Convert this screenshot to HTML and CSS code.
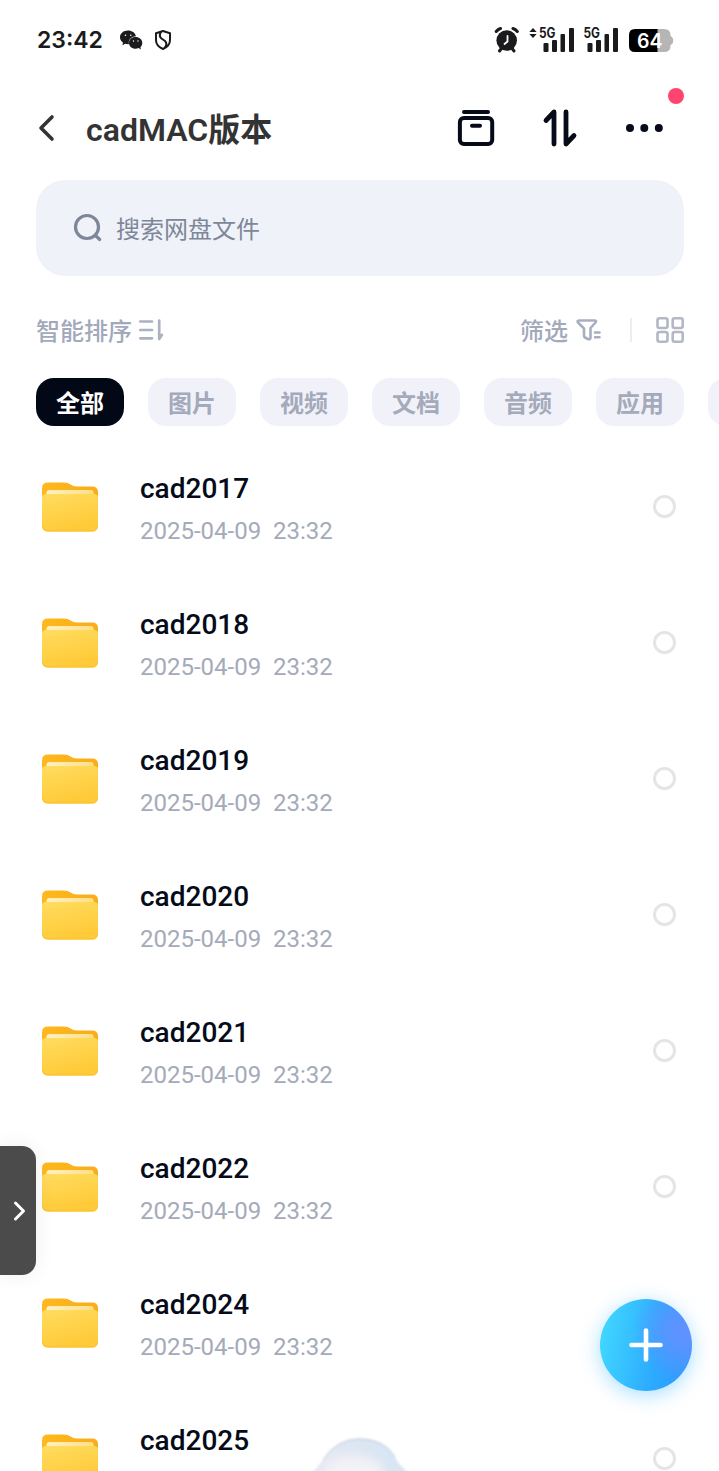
FILE: index.html
```html
<!DOCTYPE html>
<html lang="zh-CN">
<head>
<meta charset="utf-8">
<title>cadMAC版本</title>
<link rel="stylesheet" href="styles.css">
</head>
<body>
<svg class="defs" width="0" height="0" aria-hidden="true">
  <defs>
    <linearGradient id="front" x1="0" y1="0" x2="0.35" y2="1"><stop offset="0" stop-color="#ffdc60"/><stop offset="1" stop-color="#ffca38"/></linearGradient>
    <linearGradient id="back" x1="0" y1="0" x2="1" y2="0"><stop offset="0" stop-color="#ffb81f"/><stop offset="1" stop-color="#f9ad16"/></linearGradient>
    <linearGradient id="paper" x1="0" y1="0" x2="1" y2="0"><stop offset="0" stop-color="#fff0c4"/><stop offset="1" stop-color="#ffdf86"/></linearGradient>
  </defs>
  <symbol id="folder" viewBox="0 0 56 50">
    <path fill="url(#back)" d="M0 18V6Q0 .5 6 .5H22Q26 .5 28.500 2.500Q31 4.500 35 4.500H50Q56 4.500 56 10V18Z"/>
    <path fill="url(#paper)" d="M4.500 14V10.500Q4.500 8 7.500 8H48.500Q51.500 8 51.500 10.500V14Z"/>
    <path fill="url(#front)" d="M0 15.500Q0 12 4 12H52Q56 12 56 15.500V43.500Q56 49.500 50 49.500H6Q0 49.500 0 43.500Z"/>
    <path fill="none" stroke="#fabf30" stroke-width="1" d="M.7 44Q1 49 6 49H50Q55 49 55.300 44"/>
  </symbol>
</svg>
<main class="screen">
  <header class="status">
    <time class="clock">23:42</time>
    <svg class="wechat" width="24" height="22" viewBox="119 29 24 22"><path fill="#1b1b1d" d="M128 30.500C123.500 30.500 120 33.400 120 37.200C120 39.500 121.200 41.300 123 42.600L122.400 45.200L125.300 43.700Q127 44.300 129 44.100C128 39.800 131 36.400 136 36.200C135 32.700 132 30.500 128 30.500Z"/><path fill="#1b1b1d" d="M135.500 37C131.600 37 129 39.600 129 42.900C129 46.200 131.900 48.700 135.500 48.700Q137.200 48.700 138.600 48.100L141 49.400L140.400 47.200C141.500 46.100 142.300 44.600 142.300 42.900C142.300 39.500 139.300 37 135.500 37Z"/><g fill="#fff"><circle cx="125.500" cy="35.300" r=".8"/><circle cx="130.800" cy="35.300" r=".8"/><circle cx="133.500" cy="41" r=".7"/><circle cx="138" cy="41" r=".7"/></g></svg>
    <svg class="shield" width="18" height="22" viewBox="154 29 18 22"><path fill="none" stroke="#1b1b1d" stroke-width="2" stroke-linejoin="round" d="M163 31L170 33.300V40Q170 46 163 49Q156 46 156 40V33.300ZM161 32Q158.500 36 161.500 38.500L165 41Q168 44 164.500 48"/></svg>
    <svg class="alarm" width="26" height="28" viewBox="494 26 26 28"><circle cx="506.700" cy="40.500" r="10.300" fill="#1b1b1d"/><g fill="none" stroke="#1b1b1d" stroke-width="3" stroke-linecap="round"><path d="M496.200 31.500Q498 29.200 500.500 28.500M517.300 31.500Q515.500 29.200 513 28.500M501 49L499.500 51M512.500 49L514 51"/></g><path fill="none" stroke="#fff" stroke-width="1.800" stroke-linecap="round" d="M507.500 36V41.500L504.500 44"/></svg>
    <svg class="signal-main" width="46" height="40" viewBox="529 20 46 40"><g fill="#1b1b1d"><path d="M529.300 32L533 28L536.700 32ZM529.300 34H536.700L533 38Z"/><text class="network" x="539" y="38.300" textLength="16.500" lengthAdjust="spacingAndGlyphs">5G</text><rect x="543.500" y="43" width="5" height="9" rx="1"/><rect x="552" y="40" width="5" height="12" rx="1"/><rect x="560.500" y="34" width="4.500" height="18" rx="1"/><rect x="569" y="28" width="5" height="24" rx="1"/></g></svg>
    <svg class="signal-second" width="36" height="40" viewBox="583 20 36 40"><g fill="#1b1b1d"><text class="network" x="583.500" y="38.300" textLength="16.500" lengthAdjust="spacingAndGlyphs">5G</text><rect x="587.500" y="43" width="5" height="9" rx="1"/><rect x="596" y="40" width="5" height="12" rx="1"/><rect x="604.500" y="34" width="4.500" height="18" rx="1"/><rect x="613" y="28" width="5" height="24" rx="1"/></g></svg>
    <svg class="battery" width="45" height="40" viewBox="629 20 45 40"><path fill="#b5b5b5" d="M657 29H664Q670.500 29 670.500 35V36Q673.200 37 673.200 40.500Q673.200 44 670.500 45V46Q670.500 52 664 52H657Z"/><path fill="#000" d="M657.500 29H635Q629 29 629 35V46Q629 52 635 52H657.500Z"/><text class="charge" x="637" y="48" textLength="25.500" lengthAdjust="spacingAndGlyphs">64</text></svg>
  </header>

  <nav class="topbar">
    <svg class="back" width="18" height="30" viewBox="38 113 18 30"><path fill="none" stroke="#333" stroke-width="3.600" stroke-linecap="round" stroke-linejoin="round" d="M52 117L41 128L52 139"/></svg>
    <h1 class="title">cadMAC版本</h1>
    <svg class="archive" width="38" height="38" viewBox="457 109 38 38"><g fill="none" stroke="#050b19" stroke-width="4" stroke-linecap="round"><path d="M464 112H488M472 125.800H480"/><rect x="459.900" y="118" width="32.300" height="26" rx="4"/></g></svg>
    <svg class="transfer" width="36" height="40" viewBox="542 108 36 40"><path fill="none" stroke="#050b19" stroke-width="4.800" stroke-linecap="round" stroke-linejoin="round" d="M554 144V112L546 120.500M566 112V144L574 135.500"/></svg>
    <span class="more"><svg width="39" height="10" viewBox="625 123 39 10"><g fill="#050b19"><circle cx="630" cy="128" r="4"/><circle cx="644.300" cy="128" r="4"/><circle cx="658.800" cy="128" r="4"/></g></svg><i class="dot"></i></span>
  </nav>

  <div class="search">
    <svg width="30" height="30" viewBox="73 213 30 30"><g fill="none" stroke="#7e8798" stroke-width="3.200" stroke-linecap="round"><circle cx="87" cy="227" r="11.500"/><path d="M95.500 235.500L99.700 239.500"/></g></svg>
    <span>搜索网盘文件</span>
  </div>

  <div class="tools">
    <span class="label">智能排序</span>
    <svg class="sort" width="26" height="24" viewBox="138 318 26 24"><g fill="none" stroke="#abb1c1" stroke-width="2.700" stroke-linecap="round" stroke-linejoin="round"><path d="M140.300 321.500H152M140.300 330H152M140.300 338.300H152M159.200 320.500V339L161.800 335"/></g></svg>
    <span class="label filter">筛选</span>
    <svg class="funnel" width="26" height="24" viewBox="576 318 26 24"><g fill="none" stroke="#a8aec0" stroke-width="2.600" stroke-linecap="round" stroke-linejoin="round"><path d="M579 320.500H594.500Q597 320.500 595.500 322.500L590.500 328V337.500Q590.500 340 588 339L585 337.500Q584 337 584 336V328.500L578 322.500Q576.800 320.800 579 320.500ZM595 332.500H599.500M595 337.300H599.500"/></g></svg>
    <i class="divider"></i>
    <svg class="grid" width="30" height="28" viewBox="655 316 30 28"><g fill="none" stroke="#b3b7c6" stroke-width="2.600"><rect x="657.500" y="318.300" width="10" height="9.700" rx="2"/><rect x="672.700" y="318.300" width="10" height="9.700" rx="2"/><rect x="657.500" y="332" width="10" height="9.700" rx="2"/><rect x="672.700" y="332" width="10" height="9.700" rx="2"/></g></svg>
  </div>

  <div class="chips">
    <span class="chip active">全部</span><span class="chip">图片</span><span class="chip">视频</span><span class="chip">文档</span><span class="chip">音频</span><span class="chip">应用</span><span class="chip"></span>
  </div>

  <ul class="files">
    <li class="file"><svg class="folder"><use href="#folder"/></svg><div class="info"><b>cad2017</b><small>2025-04-09&nbsp; 23:32</small></div><i class="radio"></i></li>
    <li class="file"><svg class="folder"><use href="#folder"/></svg><div class="info"><b>cad2018</b><small>2025-04-09&nbsp; 23:32</small></div><i class="radio"></i></li>
    <li class="file"><svg class="folder"><use href="#folder"/></svg><div class="info"><b>cad2019</b><small>2025-04-09&nbsp; 23:32</small></div><i class="radio"></i></li>
    <li class="file"><svg class="folder"><use href="#folder"/></svg><div class="info"><b>cad2020</b><small>2025-04-09&nbsp; 23:32</small></div><i class="radio"></i></li>
    <li class="file"><svg class="folder"><use href="#folder"/></svg><div class="info"><b>cad2021</b><small>2025-04-09&nbsp; 23:32</small></div><i class="radio"></i></li>
    <li class="file"><svg class="folder"><use href="#folder"/></svg><div class="info"><b>cad2022</b><small>2025-04-09&nbsp; 23:32</small></div><i class="radio"></i></li>
    <li class="file"><svg class="folder"><use href="#folder"/></svg><div class="info"><b>cad2024</b><small>2025-04-09&nbsp; 23:32</small></div><i class="radio"></i></li>
    <li class="file"><svg class="folder"><use href="#folder"/></svg><div class="info"><b>cad2025</b></div><i class="radio"></i></li>
  </ul>

  <div class="drawer"><svg width="14" height="22" viewBox="12 1200 14 22"><path fill="none" stroke="#fff" stroke-width="3" stroke-linecap="round" stroke-linejoin="round" d="M15.500 1203L23.500 1211L15.500 1219"/></svg></div>
  <div class="add"><svg width="36" height="36" viewBox="0 0 36 36"><path fill="none" stroke="#fff" stroke-width="4.600" stroke-linecap="round" d="M18 3.500V32.500M3.500 18H32.500"/></svg></div>
  <svg class="assistant" width="110" height="36" viewBox="305 1435 110 36">
    <defs>
      <linearGradient id="dome" x1="0" y1="0.300" x2="1" y2="0"><stop offset="0" stop-color="#e6e9f3"/><stop offset=".5" stop-color="#dce6f2"/><stop offset="1" stop-color="#cfe5fa"/></linearGradient>
      <filter id="edge" x="-20%" y="-20%" width="140%" height="140%"><feGaussianBlur stdDeviation="1"/></filter>
      <filter id="glow" x="-30%" y="-30%" width="160%" height="160%"><feGaussianBlur stdDeviation="4"/></filter>
    </defs>
    <g filter="url(#edge)"><path fill="url(#dome)" d="M309 1475Q318 1467 323 1460Q336 1438.500 360 1438.500Q387 1438.500 397 1461Q401 1467 411 1475Z"/><path fill="none" stroke="#c3cad8" stroke-width="1" d="M323 1460Q336 1439 360 1439Q384 1439 395 1457"/></g>
    <ellipse cx="354" cy="1470" rx="29" ry="14" fill="#f2f1f7" filter="url(#glow)"/>
  </svg>
</main>
</body>
</html>
```
FILE: styles.css
```css
* { box-sizing: border-box; }
body { margin: 0; background: #fff; font-family: Roboto, "Noto Sans CJK SC", sans-serif; }
svg { display: block; flex: none; }
.defs { position: absolute; }
.screen { position: relative; width: 719px; height: 1471px; overflow: hidden; background: #fff; }

.status { display: flex; align-items: center; height: 80px; padding-left: 37px; }
.clock { width: 82px; font: 600 23px/28px Inter, sans-serif; color: #1b1b1d; }
.shield { margin-left: 11px; }
.alarm { margin-left: 322px; }
.signal-main { margin-left: 9px; }
.signal-second { margin-left: 8px; }
.battery { margin-left: 10px; }
.network { font: 700 14px Inter, sans-serif; }
.charge { font: 600 20px Inter, sans-serif; fill: #fff; }

.topbar { display: flex; align-items: center; height: 96px; padding-left: 38px; }
.title { width: 371px; margin: 0 0 0 30px; padding-top: 4px; font-size: 32px; line-height: 40px; font-weight: 600; color: #333; white-space: nowrap; }
.transfer { margin-left: 47px; }
.more { position: relative; margin-left: 47px; }
.dot { position: absolute; left: 43px; top: -35px; width: 16px; height: 16px; border-radius: 50%; background: #ff4470; }

.search { display: flex; align-items: center; gap: 13px; height: 96px; margin: 4px 35px 0 36px; padding-left: 37px; border-radius: 29px; background: #f0f2fa; color: #7e8798; font-size: 24px; line-height: 36px; }
.search span { padding-top: 3px; }

.tools { display: flex; align-items: center; height: 40px; margin-top: 34px; padding-left: 36px; color: #a2a9bb; font-size: 24px; line-height: 36px; font-weight: 500; }
.label { padding-top: 3px; }
.sort { margin-left: 6px; }
.filter { margin-left: 356px; }
.funnel { margin-left: 8px; }
.divider { width: 2px; height: 24px; margin: 0 23px 0 28px; background: #eceef3; }

.chips { display: flex; gap: 24px; margin-top: 28px; padding-left: 36px; overflow: hidden; }
.chip { flex: none; width: 88px; height: 48px; border-radius: 18px; background: #f1f2f9; color: #a4aabb; text-align: center; font-size: 24px; line-height: 52px; font-weight: 700; }
.chip.active { background: #030817; color: #fff; }

.files { margin: 13px 0 0; padding: 0; list-style: none; }
.file { display: flex; align-items: flex-start; height: 136px; padding: 43px 43px 0 42px; }
.folder { width: 56px; height: 50px; }
.info { display: flex; flex-direction: column; flex: 1; margin: -10px 0 0 42px; }
.info b { font-size: 28px; line-height: 34px; font-weight: 500; color: #050b19; }
.info small { margin-top: 9px; font-size: 24px; line-height: 32px; color: #a5aaba; }
.radio { width: 23px; height: 23px; margin-top: 13px; border: 3px solid #e5e5e6; border-radius: 50%; }

.drawer { position: absolute; left: 0; top: 1146px; display: flex; align-items: center; width: 36px; height: 129px; padding-left: 12px; border-radius: 0 14px 14px 0; background: #4b4b4b; box-shadow: 0 0 20px rgba(0, 0, 0, .07); }
.add { position: absolute; left: 600px; top: 1299px; display: flex; align-items: center; justify-content: center; width: 92px; height: 92px; border-radius: 50%; background: radial-gradient(circle at 92% 35%, #5e92ff 0, #5e92ff 10%, rgba(94, 146, 255, 0) 50%), linear-gradient(100deg, #40d5ff 8%, #2caaff 62%, #2d9eff 85%); box-shadow: 0 4px 20px rgba(63, 185, 255, .45); }
.assistant { position: absolute; left: 305px; top: 1435px; }
```
